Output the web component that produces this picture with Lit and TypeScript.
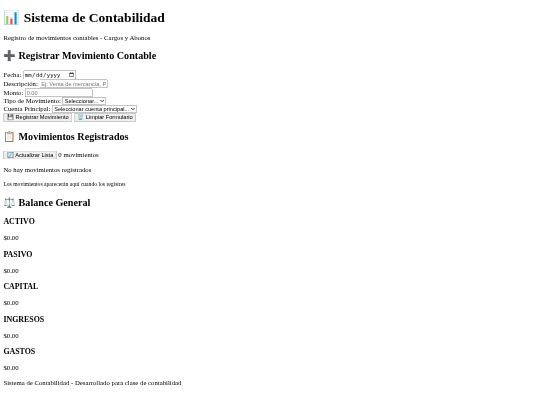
import { LitElement, html, css } from "lit";
import { customElement } from "lit/decorators.js";

@customElement("app-root")
export class AppRoot extends LitElement {
  static styles = css`
    :host {
      display: block;
      width: 540px;
      height: 405px;
      overflow: hidden;
      background: #fff;
    }
    .page {
      display: flow-root;
      width: 1280px;
      box-sizing: border-box;
      padding: 0 8px 8px;
      transform: scale(0.421875);
      transform-origin: 0 0;
      filter: blur(0.8px);
      font-family: "Liberation Serif", "Times New Roman", serif;
      font-size: 16px;
      color: #000;
    }
    h1 { font-size: 32px; margin: 21.44px 0; font-weight: bold; }
    h2 { font-size: 24px; margin: 19.92px 0; font-weight: bold; }
    h3 { font-size: 18.72px; margin: 18.72px 0; font-weight: bold; }
    p { margin: 16px 0; }
    small { font-size: 13.33px; }
    .field { width: 153px; }
  `;

  render() {
    const balances = ["ACTIVO", "PASIVO", "CAPITAL", "INGRESOS", "GASTOS"];
    return html`
      <div class="page">
        <h1>📊 Sistema de Contabilidad</h1>
        <p>Registro de movimientos contables - Cargos y Abonos</p>
        <h2>➕ Registrar Movimiento Contable</h2>
        <form @submit=${(e: Event) => e.preventDefault()}>
          <label>Fecha: </label><input type="date" /><br />
          <label>Descripción: </label><input class="field" type="text" placeholder="Ej: Venta de mercancía, Pago de servicios" /><br />
          <label>Monto: </label><input class="field" type="number" placeholder="0.00" /><br />
          <label>Tipo de Movimiento: </label><select><option>Seleccionar...</option></select><br />
          <label>Cuenta Principal: </label><select><option>Seleccionar cuenta principal...</option></select><br />
          <button type="submit">💾 Registrar Movimiento</button>
          <button type="reset">🗑️ Limpiar Formulario</button>
        </form>
        <h2>📋 Movimientos Registrados</h2>
        <div><button>🔄 Actualizar Lista</button> <span>0 movimientos</span></div>
        <p>No hay movimientos registrados</p>
        <p><small>Los movimientos aparecerán aquí cuando los registres</small></p>
        <h2>⚖️ Balance General</h2>
        ${balances.map((b) => html`<h3>${b}</h3><p>$0.00</p>`)}
        <p>Sistema de Contabilidad - Desarrollado para clase de contabilidad</p>
      </div>
    `;
  }
}
